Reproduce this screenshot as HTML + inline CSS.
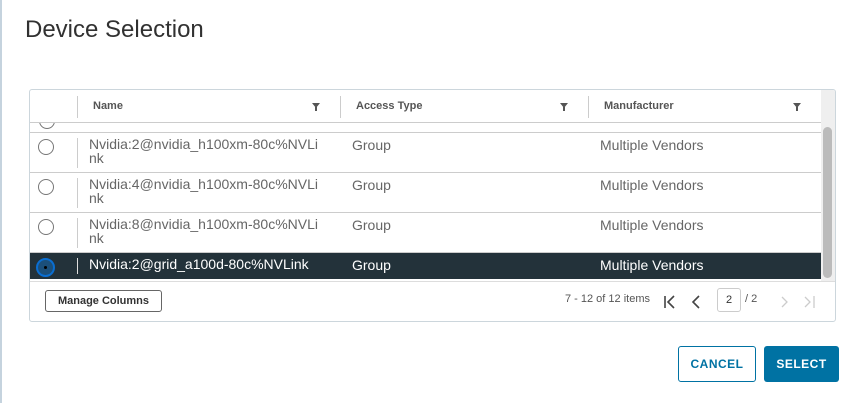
<!DOCTYPE html><html><head><style>
*{box-sizing:border-box;margin:0;padding:0}
body{width:859px;height:403px;background:#fff;font-family:"Liberation Sans",sans-serif;position:relative;overflow:hidden;color:#565656}
.a{position:absolute}
.lb{left:0;top:0;width:2px;height:403px;background:#c5d3de}
h1{position:absolute;left:25px;top:16px;font-size:24px;font-weight:normal;color:#313131}
.grid{left:29px;top:89px;width:807px;height:233px;border:1px solid #ccd6dc;border-radius:3px;overflow:hidden}
.hd{left:0;top:0;width:791px;height:33px;border-bottom:1px solid #ccc;font-size:11px;font-weight:bold;color:#555}
.sep{width:1px;background:#ccc}
.row{left:0;width:791px;border-bottom:1px solid #ccc;font-size:14px;color:#666}
.nm{white-space:nowrap}
.rad{width:16px;height:16px;border:1px solid #777;border-radius:50%;background:#fff}
.f{width:0;height:0;border-left:4px solid transparent;border-right:4px solid transparent;border-top:5px solid #555}
.fs{width:2px;height:4px;background:#555}
.btn{border-radius:3px;font-size:12px;text-align:center;font-weight:bold;letter-spacing:.5px}
</style></head><body>
<div class="a lb"></div>
<h1>Device Selection</h1>
<div class="a grid">
 <div class="a hd">
  <div class="a sep" style="left:47px;top:6px;height:22px"></div>
  <div class="a sep" style="left:310px;top:6px;height:22px"></div>
  <div class="a sep" style="left:558px;top:6px;height:22px"></div>
  <div class="a" style="left:63px;top:10px">Name</div>
  <div class="a" style="left:326px;top:10px">Access Type</div>
  <div class="a" style="left:574px;top:10px">Manufacturer</div>
  <div class="a f" style="left:282px;top:13px"></div><div class="a fs" style="left:285px;top:17px"></div>
  <div class="a f" style="left:530px;top:13px"></div><div class="a fs" style="left:533px;top:17px"></div>
  <div class="a f" style="left:763px;top:13px"></div><div class="a fs" style="left:766px;top:17px"></div>
 </div>
 <div class="a" style="left:0;top:33px;width:791px;height:10px;border-bottom:1px solid #ccc;overflow:hidden">
  <div class="a rad" style="left:9px;top:-10px"></div>
 </div>
 <div class="a row" style="top:43px;height:40px"><div class="a rad" style="left:8px;top:6px"></div><div class="a sep" style="left:47px;top:5px;height:30px"></div><div class="a nm" style="left:59px;top:4px;line-height:14px">Nvidia:2@nvidia_h100xm-80c%NVLi<br>nk</div><div class="a" style="left:322px;top:4px">Group</div><div class="a" style="left:570px;top:4px">Multiple Vendors</div></div>
 <div class="a row" style="top:83px;height:40px"><div class="a rad" style="left:8px;top:6px"></div><div class="a sep" style="left:47px;top:5px;height:30px"></div><div class="a nm" style="left:59px;top:4px;line-height:14px">Nvidia:4@nvidia_h100xm-80c%NVLi<br>nk</div><div class="a" style="left:322px;top:4px">Group</div><div class="a" style="left:570px;top:4px">Multiple Vendors</div></div>
 <div class="a row" style="top:123px;height:40px"><div class="a rad" style="left:8px;top:6px"></div><div class="a sep" style="left:47px;top:5px;height:30px"></div><div class="a nm" style="left:59px;top:4px;line-height:14px">Nvidia:8@nvidia_h100xm-80c%NVLi<br>nk</div><div class="a" style="left:322px;top:4px">Group</div><div class="a" style="left:570px;top:4px">Multiple Vendors</div></div>
 <div class="a row" style="top:163px;height:26px;background:#23323a;color:#fff;border:none"><div class="a rad" style="left:6px;top:5px;width:19px;height:19px;border:2px solid #0a6ed1;background:#1b4f7a"><div class="a" style="left:6px;top:6px;width:3px;height:3px;border-radius:50%;background:#000"></div></div><div class="a sep" style="left:47px;top:5px;height:16px;background:#ddd"></div><div class="a" style="left:59px;top:4px;line-height:14px">Nvidia:2@grid_a100d-80c%NVLink</div><div class="a" style="left:322px;top:4px">Group</div><div class="a" style="left:570px;top:4px">Multiple Vendors</div></div>
 <div class="a" style="left:791px;top:0;width:15px;height:191px;background:#efefef"></div>
 <div class="a" style="left:793px;top:37px;width:9px;height:151px;border-radius:5px;background:#bbb"></div>
 <div class="a" style="left:0;top:191px;width:807px;height:1px;background:#ddd"></div>
 <div class="a btn" style="left:15px;top:200px;width:117px;height:22px;border:1px solid #666;color:#333;font-size:11px;line-height:20px;letter-spacing:0">Manage Columns</div>
 <div class="a" style="left:535px;top:203px;font-size:11px;color:#555">7 - 12 of 12 items</div>
 <svg class="a" style="left:630px;top:202px" width="160" height="20"><g fill="none" stroke="#444" stroke-width="1.6"><path d="M5 4v12M14 4l-6 6 6 6M39 4l-6 6 6 6"/></g><g fill="none" stroke="#ccc" stroke-width="1.3"><path d="M122 5l5 5-5 5M145 5l5 5-5 5M154 4v12"/></g></svg>
 <div class="a" style="left:687px;top:198px;width:24px;height:24px;border:1px solid #ccc;border-radius:3px;font-size:11px;color:#333;text-align:center;line-height:22px">2</div>
 <div class="a" style="left:715px;top:203px;font-size:11px;color:#555">/ 2</div>
</div>
<div class="a btn" style="left:678px;top:346px;width:78px;height:36px;border:1px solid #0072a3;color:#0072a3;line-height:34px">CANCEL</div>
<div class="a btn" style="left:764px;top:346px;width:75px;height:36px;background:#0072a3;color:#fff;line-height:36px">SELECT</div>
</body></html>
